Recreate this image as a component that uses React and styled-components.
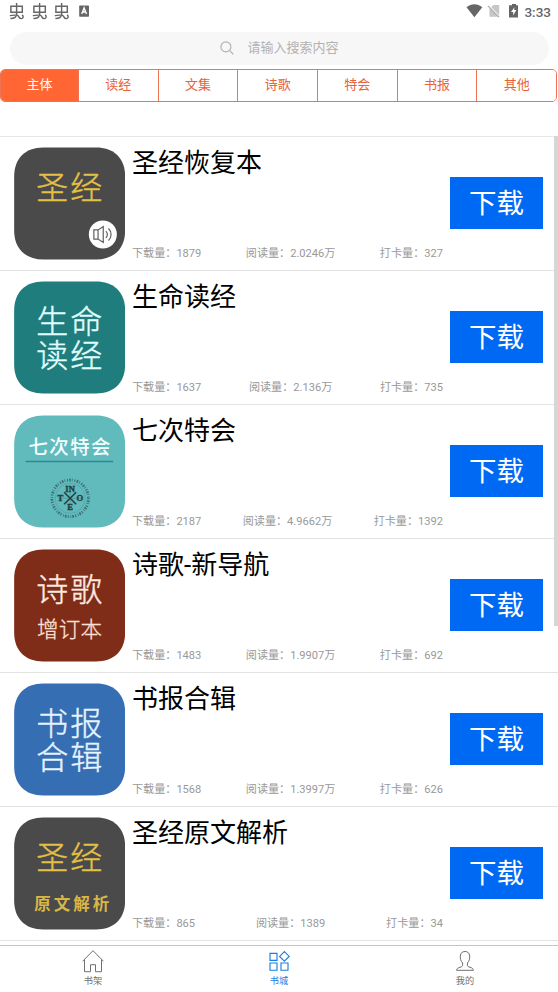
import React from "react";
import styled, { createGlobalStyle } from "styled-components";

const sans = '"Roboto", "Noto Sans CJK SC", sans-serif';

const GlobalStyle = createGlobalStyle`
  * { box-sizing: border-box; }
  body { margin: 0; background: #fff; font-family: ${sans}; }
`;

const Screen = styled.div`
  position: relative;
  display: flex;
  flex-direction: column;
  width: 558px;
  height: 992px;
  overflow: hidden;
  background: #fff;
`;

const StatusBar = styled.header`
  display: flex;
  flex: none;
  justify-content: space-between;
  height: 32px;
  padding: 0 7px 0 9px;
  color: #666;
`;

const StatusGroup = styled.div`
  display: flex;
  align-items: flex-start;
  height: 24px;
`;

const Clock = styled.time`
  margin-left: 5px;
  padding-top: 3px;
  font-size: 13.5px;
  font-weight: 500;
  line-height: 18px;
  color: #666;
`;

const SearchBar = styled.div`
  display: flex;
  flex: none;
  align-items: center;
  justify-content: center;
  gap: 13px;
  height: 33px;
  margin: 0 9px 0 10px;
  padding: 0 0 2px;
  border-radius: 17px;
  background: #f7f7f7;
  color: #b2b2b2;
  font-size: 13px;
  line-height: 20px;
`;

const Tabs = styled.nav`
  display: grid;
  flex: none;
  grid-template-columns: 77px repeat(6, 1fr);
  height: 33px;
  margin: 4px 1px 0 0;
  border: 1px solid #ea7550;
  border-radius: 5px;
  overflow: hidden;
`;

const Tab = styled.button`
  padding: 0 0 2px;
  border: 0;
  border-left: ${(p) => (p.$active ? "0" : "1px solid #ea7550")};
  background: ${(p) => (p.$active ? "#ff6633" : "#fff")};
  color: ${(p) => (p.$active ? "#fff" : "#e8623a")};
  font: 400 13px/20px ${sans};
`;

const List = styled.main`
  flex: none;
  height: 809px;
  margin-top: 34px;
  overflow: hidden;
  border-top: 1px solid #e6e6e6;
`;

const Row = styled.article`
  display: flex;
  height: 134px;
  padding: 10px 15px 0 13.7px;
  border-bottom: 1px solid #e2e2e2;
`;

const Tile = styled.svg`
  flex: none;
  width: 111.3px;
  height: 113px;
  font-family: "Noto Sans CJK SC", sans-serif;
`;

const Details = styled.div`
  display: flex;
  flex-direction: column;
  justify-content: space-between;
  width: 311px;
  height: 114px;
  margin: 0 7px 0 7px;
`;

const Title = styled.h2`
  margin: 1px 0 0;
  color: #000;
  font-size: 26px;
  font-weight: 400;
  line-height: 30px;
  white-space: nowrap;
`;

const Stats = styled.div`
  display: flex;
  justify-content: space-between;
  margin-bottom: -1px;
  color: #999;
  font-size: 11.1px;
  line-height: 16px;
  white-space: nowrap;
`;

const Download = styled.button`
  flex: none;
  width: 93px;
  height: 52px;
  margin-top: 30px;
  padding: 2px 0 0;
  border: 0;
  background: #0069f3;
  color: #fff;
  font: 400 27.5px/40px ${sans};
`;

const ScrollThumb = styled.div`
  position: absolute;
  top: 136px;
  right: 0;
  width: 4px;
  height: 490px;
  background: #d6d6d6;
`;

const BottomNav = styled.nav`
  display: grid;
  flex: none;
  grid-template-columns: repeat(3, 1fr);
  height: 47px;
  border-top: 1px solid #c4c4c4;
  background: #fff;
`;

const NavItem = styled.a`
  display: flex;
  flex-direction: column;
  align-items: center;
  padding-top: 3px;
  color: ${(p) => (p.$active ? "#1a80e0" : "#707070")};
  font-size: 9.2px;
  line-height: 13px;
`;

const BugIcon = () => (
  <svg width="22.5" height="22" viewBox="0 0 22.5 22" fill="none" stroke="#666" strokeWidth="1.45">
    <path d="M7.6 3v12.5M1.9 6.2h11.4v6H1.9z" />
    <path d="M.8 15.6c2.6-.2 5.6-.9 7.7-.2 2 .8 1.2 3.2 3.7 3.2 2.2 0 2.7-2.8.8-3.6M7.2 15.4c-.2 1.9-2.1 3.1-5.8 3" />
  </svg>
);

const KeyboardIcon = () => (
  <svg width="12" height="22" viewBox="0 0 12 22">
    <rect x="2.2" y="5.6" width="9.8" height="11.2" rx="0.7" fill="#666" />
    <path d="M4.7 14 7.1 7.9 9.5 14M5.5 12h3.2" fill="none" stroke="#fff" strokeWidth="1.3" />
  </svg>
);

const WifiIcon = () => (
  <svg width="17" height="20" viewBox="0 0 17 20">
    <path d="M.5 7.2C5.3 3.1 11.4 3.1 16.3 7.2L8.4 17.2z" fill="#666" />
  </svg>
);

const NoSimIcon = () => (
  <svg width="23" height="20" viewBox="0 0 23 20">
    <path d="M8.2 7.1 10.5 5h5.7v11.7H6.4V8.8z" fill="#c6c6c6" />
    <path d="M4.8 4.6 16.7 17" stroke="#fff" strokeWidth="1.5" />
    <path d="m5 5.8 11 11.4" stroke="#aaa" strokeWidth="1.2" />
  </svg>
);

const BatteryIcon = () => (
  <svg width="13" height="20" viewBox="0 0 13 20">
    <path d="M6 4h4v1.3h2v12.2H3V5.3h3z" fill="#666" />
    <path d="M8.5 7.2 5 12h2.2v3.4L10.3 10H8.2z" fill="#fff" />
  </svg>
);

const SearchIcon = () => (
  <svg width="14" height="14" viewBox="0 0 14 14" fill="none" stroke="#b2b2b2" strokeWidth="1.2">
    <circle cx="5.9" cy="5.9" r="5" />
    <path d="m9.6 9.6 3.7 3.6" />
  </svg>
);

const HomeIcon = () => (
  <svg width="24" height="25" viewBox="0 0 24 25" fill="none" stroke="#707070" strokeWidth="1">
    <path d="M1.5 12.3 12 1.7l10.5 10.6M3.5 10.5v12.2h6v-7h5v7h6V10.5" />
  </svg>
);

const GridIcon = () => (
  <svg width="24" height="25" viewBox="0 0 24 25" fill="none" stroke="#1a80e0" strokeWidth="1.15">
    <path d="M3 4.4h7v7H3zM3 14h7v7.2H3zM14 14h7v7.2h-7zM17.4 2.6l4.8 4.8-4.8 4.8-4.8-4.8z" />
  </svg>
);

const PersonIcon = () => (
  <svg width="24" height="25" viewBox="0 0 24 25" fill="none" stroke="#707070" strokeWidth="1">
    <path d="M9.6 14c-1.9-2-2.5-4.3-2.3-7 .2-3 2-4.5 4.7-4.5s4.5 1.5 4.7 4.5c.2 2.7-.4 5-2.3 7v2.2c0 1.1 1 1.6 2.6 2.1 2.1.6 3.2 1.1 3.4 3H3.6c.2-1.9 1.3-2.4 3.4-3 1.6-.5 2.6-1 2.6-2.1z" />
  </svg>
);

/* A large two-character line of cover lettering. */
const CoverLine = ({ text, y, fill, size = 32 }) => (
  <text
    x="55"
    y={y}
    fontSize={size}
    fontWeight="300"
    textAnchor="middle"
    fill={fill}
    stroke={fill}
    strokeWidth="0.4"
    textLength="66"
  >
    {text}
  </text>
);

const Seal = () => (
  <g transform="translate(56 82.8)" stroke="#253f43" fill="none">
    <circle r="18.3" strokeWidth="2.8" strokeDasharray="1 1.2 1.7 1.1 .7 1.8" opacity=".6" />
    <circle r="15" strokeWidth=".5" opacity=".3" />
    <path d="m-6-6 12 12M6-6-6 6" strokeWidth="1.6" />
    <path d="M0-12V12M-12 0h24" strokeWidth=".5" opacity=".4" />
    <g fill="#253f43" strokeWidth=".4" fontFamily="Liberation Serif, serif" fontWeight="700" fontSize="8.6" textAnchor="middle">
      <text x="0" y="-6.3">IN</text>
      <text x="-9.8" y="3">T</text>
      <text x="9.6" y="3">O</text>
      <text x="0" y="11.8">E</text>
    </g>
  </g>
);

const Speaker = () => (
  <g transform="translate(88.7 87)">
    <circle r="14" fill="#fff" />
    <g fill="none" stroke="#606060" strokeWidth="1.2">
      <path d="M-9-4.6h4.2L.4-8v16l-5.2-3.4H-9zM-4.8-4.3v8.6M3-3.4c2 1.8 2 5 0 6.8M5.6-6c3.5 3.3 3.5 8.7 0 12" />
    </g>
  </g>
);

const gold = "#e4c044";

const books = [
  {
    title: "圣经恢复本", color: "#4a4a4a", stats: ["1879", "2.0246万", "327"],
    art: <><CoverLine text="圣经" y="51.5" fill={gold} /><Speaker /></>,
  },
  {
    title: "生命读经", color: "#1f7d7e", stats: ["1637", "2.136万", "735"],
    art: <><CoverLine text="生命" y="51.5" fill="#e0ffff" /><CoverLine text="读经" y="85.5" fill="#e0ffff" /></>,
  },
  {
    title: "七次特会", color: "#61babc", stats: ["2187", "4.9662万", "1392"],
    art: (
      <>
        <text x="55.3" y="38" fontSize="19.4" fontWeight="500" textAnchor="middle" textLength="82" fill="#f2ffff">七次特会</text>
        <path d="M11.5 46h87.5" stroke="#31888e" strokeWidth="1.6" />
        <Seal />
      </>
    ),
  },
  {
    title: "诗歌-新导航", color: "#7f2d18", stats: ["1483", "1.9907万", "692"],
    art: (
      <>
        <CoverLine text="诗歌" y="51.5" fill="#ffeae0" />
        <text x="55.4" y="87.5" fontSize="21.5" fontWeight="300" textAnchor="middle" textLength="65" fill="#ffe1d6" stroke="#ffe1d6" strokeWidth="0.3">增订本</text>
      </>
    ),
  },
  {
    title: "书报合辑", color: "#356eb3", stats: ["1568", "1.3997万", "626"],
    art: <><CoverLine text="书报" y="51.5" fill="#e5f4ff" /><CoverLine text="合辑" y="85.5" fill="#e5f4ff" /></>,
  },
  {
    title: "圣经原文解析", color: "#4a4a4a", stats: ["865", "1389", "34"],
    art: (
      <>
        <CoverLine text="圣经" y="51.5" fill={gold} />
        <text x="57.5" y="92.3" fontSize="16.5" fontWeight="700" textAnchor="middle" textLength="75" fill="#d9b646">原文解析</text>
      </>
    ),
  },
];

const tabs = ["主体", "读经", "文集", "诗歌", "特会", "书报", "其他"];

const BookRow = ({ book }) => (
  <Row>
    <Tile viewBox="0 -0.5 111 113">
      <path
        d="M29 0H82C100 0 111 11 111 29V83C111 101 100 112 82 112H29C11 112 0 101 0 83V29C0 11 11 0 29 0Z"
        fill={book.color}
      />
      {book.art}
    </Tile>
    <Details>
      <Title>{book.title}</Title>
      <Stats>
        <span>下载量：{book.stats[0]}</span>
        <span>阅读量：{book.stats[1]}</span>
        <span>打卡量：{book.stats[2]}</span>
      </Stats>
    </Details>
    <Download>下载</Download>
  </Row>
);

export default function App() {
  return (
    <>
      <GlobalStyle />
      <Screen>
        <StatusBar>
          <StatusGroup>
            <BugIcon />
            <BugIcon />
            <BugIcon />
            <KeyboardIcon />
          </StatusGroup>
          <StatusGroup>
            <WifiIcon />
            <NoSimIcon />
            <BatteryIcon />
            <Clock>3:33</Clock>
          </StatusGroup>
        </StatusBar>
        <SearchBar>
          <SearchIcon />
          <span>请输入搜索内容</span>
        </SearchBar>
        <Tabs>
          {tabs.map((tab, i) => (
            <Tab key={tab} $active={i === 0}>{tab}</Tab>
          ))}
        </Tabs>
        <List>
          {books.map((book) => <BookRow key={book.title} book={book} />)}
        </List>
        <BottomNav>
          <NavItem><HomeIcon />书架</NavItem>
          <NavItem $active><GridIcon />书城</NavItem>
          <NavItem><PersonIcon />我的</NavItem>
        </BottomNav>
        <ScrollThumb />
      </Screen>
    </>
  );
}
